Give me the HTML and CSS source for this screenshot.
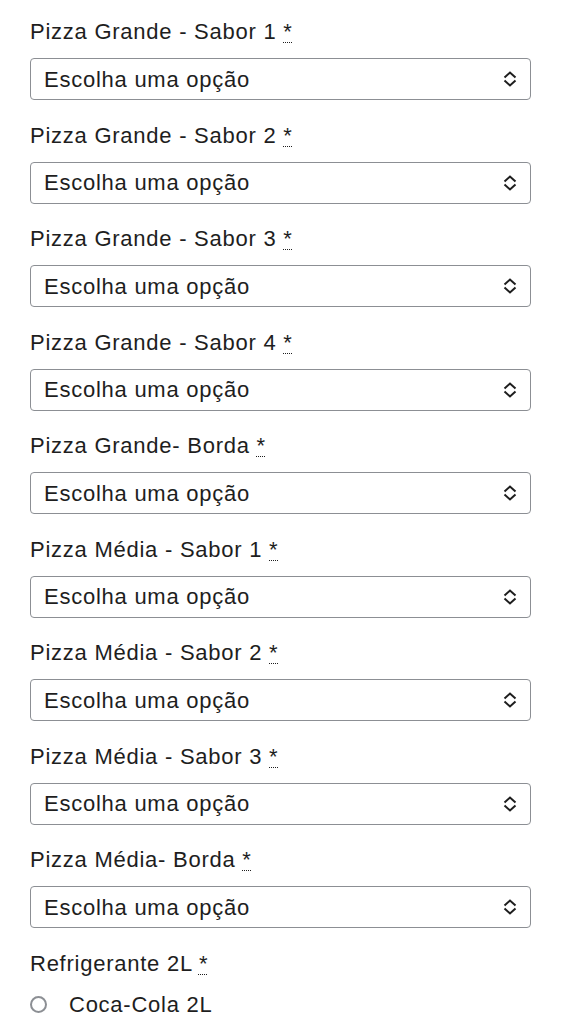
FILE: index.html
```html
<!DOCTYPE html>
<html>
<head>
    <title>Pedido - Combo Pizza</title>
    <link rel="stylesheet" href="styles.css">
</head>
<body>
    <form class="options-form">
        <div class="field">
            <label for="pg1">Pizza Grande - Sabor 1 <abbr class="required" title="obrigatório">*</abbr></label>
            <div class="select-wrap">
                <select id="pg1"><option>Escolha uma opção</option></select>
                <svg class="chevron" width="18" height="18" viewBox="0 0 18 18"><path d="M3.5 7.5 9 2.5l5.5 5M3.5 10.5 9 15.5l5.5-5"/></svg>
            </div>
        </div>
        <div class="field">
            <label for="pg2">Pizza Grande - Sabor 2 <abbr class="required" title="obrigatório">*</abbr></label>
            <div class="select-wrap">
                <select id="pg2"><option>Escolha uma opção</option></select>
                <svg class="chevron" width="18" height="18" viewBox="0 0 18 18"><path d="M3.5 7.5 9 2.5l5.5 5M3.5 10.5 9 15.5l5.5-5"/></svg>
            </div>
        </div>
        <div class="field">
            <label for="pg3">Pizza Grande - Sabor 3 <abbr class="required" title="obrigatório">*</abbr></label>
            <div class="select-wrap">
                <select id="pg3"><option>Escolha uma opção</option></select>
                <svg class="chevron" width="18" height="18" viewBox="0 0 18 18"><path d="M3.5 7.5 9 2.5l5.5 5M3.5 10.5 9 15.5l5.5-5"/></svg>
            </div>
        </div>
        <div class="field">
            <label for="pg4">Pizza Grande - Sabor 4 <abbr class="required" title="obrigatório">*</abbr></label>
            <div class="select-wrap">
                <select id="pg4"><option>Escolha uma opção</option></select>
                <svg class="chevron" width="18" height="18" viewBox="0 0 18 18"><path d="M3.5 7.5 9 2.5l5.5 5M3.5 10.5 9 15.5l5.5-5"/></svg>
            </div>
        </div>
        <div class="field">
            <label for="pgb">Pizza Grande- Borda <abbr class="required" title="obrigatório">*</abbr></label>
            <div class="select-wrap">
                <select id="pgb"><option>Escolha uma opção</option></select>
                <svg class="chevron" width="18" height="18" viewBox="0 0 18 18"><path d="M3.5 7.5 9 2.5l5.5 5M3.5 10.5 9 15.5l5.5-5"/></svg>
            </div>
        </div>
        <div class="field">
            <label for="pm1">Pizza Média - Sabor 1 <abbr class="required" title="obrigatório">*</abbr></label>
            <div class="select-wrap">
                <select id="pm1"><option>Escolha uma opção</option></select>
                <svg class="chevron" width="18" height="18" viewBox="0 0 18 18"><path d="M3.5 7.5 9 2.5l5.5 5M3.5 10.5 9 15.5l5.5-5"/></svg>
            </div>
        </div>
        <div class="field">
            <label for="pm2">Pizza Média - Sabor 2 <abbr class="required" title="obrigatório">*</abbr></label>
            <div class="select-wrap">
                <select id="pm2"><option>Escolha uma opção</option></select>
                <svg class="chevron" width="18" height="18" viewBox="0 0 18 18"><path d="M3.5 7.5 9 2.5l5.5 5M3.5 10.5 9 15.5l5.5-5"/></svg>
            </div>
        </div>
        <div class="field">
            <label for="pm3">Pizza Média - Sabor 3 <abbr class="required" title="obrigatório">*</abbr></label>
            <div class="select-wrap">
                <select id="pm3"><option>Escolha uma opção</option></select>
                <svg class="chevron" width="18" height="18" viewBox="0 0 18 18"><path d="M3.5 7.5 9 2.5l5.5 5M3.5 10.5 9 15.5l5.5-5"/></svg>
            </div>
        </div>
        <div class="field">
            <label for="pmb">Pizza Média- Borda <abbr class="required" title="obrigatório">*</abbr></label>
            <div class="select-wrap">
                <select id="pmb"><option>Escolha uma opção</option></select>
                <svg class="chevron" width="18" height="18" viewBox="0 0 18 18"><path d="M3.5 7.5 9 2.5l5.5 5M3.5 10.5 9 15.5l5.5-5"/></svg>
            </div>
        </div>
        <div class="field">
            <label>Refrigerante 2L <abbr class="required" title="obrigatório">*</abbr></label>
            <div class="radio-row">
                <input type="radio" id="coca" name="refri">
                <label for="coca">Coca-Cola 2L</label>
            </div>
        </div>
    </form>
</body>
</html>
```

FILE: styles.css
```css
body {
    margin: 0;
    font-family: "Liberation Sans", Arial, sans-serif;
    color: #1e1e1e;
    background: #fff;
}

.options-form {
    padding: 17px 45px 0 30px;
}

.field {
    margin-bottom: 20.5px;
}

.field > label {
    display: block;
    font-size: 22px;
    letter-spacing: 0.75px;
    line-height: 30px;
    margin-bottom: 11px;
}

.required {
    text-decoration: underline dotted;
    text-underline-offset: 3px;
    text-decoration-thickness: 1px;
    cursor: help;
}

.select-wrap {
    position: relative;
}

.select-wrap select {
    appearance: none;
    -webkit-appearance: none;
    display: block;
    width: 100%;
    height: 42px;
    padding: 0 40px 0 13px;
    border: 1px solid #8c8f94;
    border-radius: 4px;
    background: #fff;
    font-family: inherit;
    font-size: 22px;
    letter-spacing: 0.75px;
    color: #1e1e1e;
}

.chevron {
    position: absolute;
    right: 12px;
    top: 12px;
    fill: none;
    stroke: #1e1e1e;
    stroke-width: 2;
    pointer-events: none;
}

.radio-row {
    display: flex;
    align-items: center;
    gap: 22px;
}

.radio-row input {
    appearance: none;
    -webkit-appearance: none;
    width: 17px;
    height: 17px;
    margin: 0;
    border: 2px solid #8c8f94;
    border-radius: 50%;
    background: #fff;
}

.radio-row label {
    font-size: 22px;
    letter-spacing: 0.75px;
    line-height: 30px;
}
```
